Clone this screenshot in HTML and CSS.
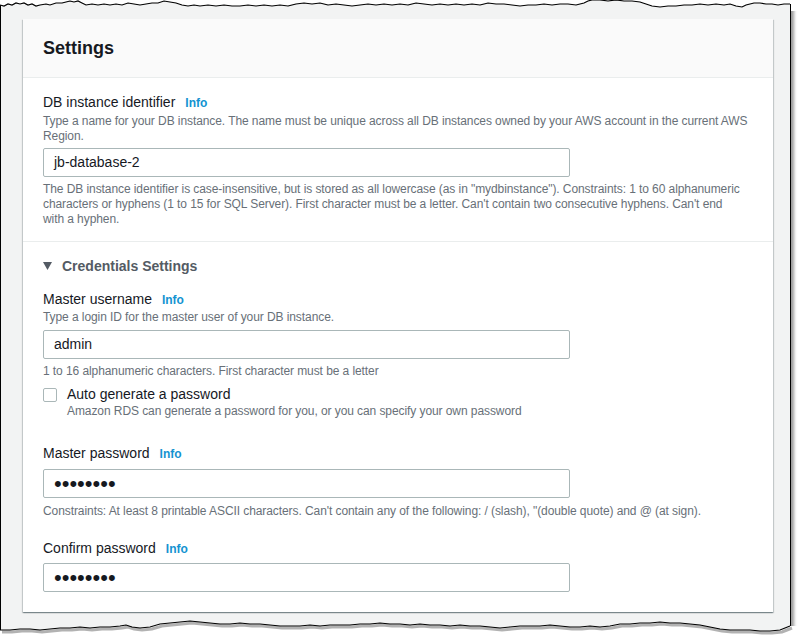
FILE: index.html
```html
<!DOCTYPE html>
<html lang="en">
<head>
    <meta charset="UTF-8">
    <meta name="viewport" content="width=device-width, initial-scale=1.0">
    <title>Settings</title>
    <link rel="stylesheet" href="styles.css">
</head>
<body>

<div class="sheet">
    <!-- torn paper edge, top -->
    <svg class="edge edge-top" width="800" height="14" viewBox="0 0 800 14">
        <polygon class="paper-cut" points="0,0 800,0 800,11 791,11 791,4 790,4 784,4 778,5 772,4 766,4 760,3 754,3 750,4 746,5 742,7 736,6 730,4 724,5 716,4 708,5 700,4 692,5 684,5 676,6 668,6 660,7 652,6 646,4 640,2 632,1 624,1 616,0 608,1 600,0 592,0 588,1 584,3 576,5 568,4 560,4 552,5 544,4 536,5 528,5 520,6 512,5 504,4 496,4 488,3 480,5 472,4 464,5 456,4 448,5 440,4 432,5 424,4 416,3 408,5 400,4 392,5 384,4 376,5 368,4 360,5 352,6 344,5 336,4 328,5 320,3 312,4 304,3 296,4 288,6 280,5 272,6 264,5 256,6 248,5 240,6 232,6 224,5 216,6 208,5 200,6 194,5 188,6 182,5 176,3 170,2 164,1 158,3 152,3 146,4 140,5 134,4 128,3 122,5 116,4 110,5 104,4 98,5 92,4 86,5 82,3 78,1 74,2 70,1 66,2 62,3 56,3 50,5 46,4 40,5 36,6 32,4 28,5 24,3 20,4 16,3 12,5 8,4 4,6 0,5"/>
        <polyline class="paper-line" points="0,5 4,6 8,4 12,5 16,3 20,4 24,3 28,5 32,4 36,6 40,5 46,4 50,5 56,3 62,3 66,2 70,1 74,2 78,1 82,3 86,5 92,4 98,5 104,4 110,5 116,4 122,5 128,3 134,4 140,5 146,4 152,3 158,3 164,1 170,2 176,3 182,5 188,6 194,5 200,6 208,5 216,6 224,5 232,6 240,6 248,5 256,6 264,5 272,6 280,5 288,6 296,4 304,3 312,4 320,3 328,5 336,4 344,5 352,6 360,5 368,4 376,5 384,4 392,5 400,4 408,5 416,3 424,4 432,5 440,4 448,5 456,4 464,5 472,4 480,5 488,3 496,4 504,4 512,5 520,6 528,5 536,5 544,4 552,5 560,4 568,4 576,5 584,3 588,1 592,0 600,0 608,1 616,0 624,1 632,1 640,2 646,4 652,6 660,7 668,6 676,6 684,5 692,5 700,4 708,5 716,4 724,5 730,4 736,6 742,7 746,5 750,4 754,3 760,3 766,4 772,4 778,5 784,4 790,4"/>
    </svg>

    <div class="card">
        <div class="card-header">
            <h2>Settings</h2>
        </div>

        <div class="section">
            <div class="field-label">DB instance identifier<a class="info">Info</a></div>
            <div class="desc desc-top">Type a name for your DB instance. The name must be unique across all DB instances owned by your AWS account in the current AWS Region.</div>
            <div class="input-box input-first">jb-database-2</div>
            <div class="desc desc-hint">The DB instance identifier is case-insensitive, but is stored as all lowercase (as in "mydbinstance"). Constraints: 1 to 60 alphanumeric characters or hyphens (1 to 15 for SQL Server). First character must be a letter. Can't contain two consecutive hyphens. Can't end with a hyphen.</div>
        </div>

        <div class="section section-last">
            <div class="expander">
                <svg class="caret" width="9" height="8" viewBox="0 0 9 8"><polygon points="0,0 9,0 4.5,8"/></svg>
                Credentials Settings
            </div>

            <div class="field-label label-user">Master username<a class="info">Info</a></div>
            <div class="desc">Type a login ID for the master user of your DB instance.</div>
            <div class="input-box">admin</div>
            <div class="desc desc-hint">1 to 16 alphanumeric characters. First character must be a letter</div>

            <div class="check-row">
                <span class="checkbox"></span>
                <div>
                    <div class="check-label">Auto generate a password</div>
                    <div class="desc">Amazon RDS can generate a password for you, or you can specify your own password</div>
                </div>
            </div>

            <div class="field-label label-pass">Master password<a class="info">Info</a></div>
            <div class="input-box password">&bull;&bull;&bull;&bull;&bull;&bull;&bull;&bull;</div>
            <div class="desc desc-hint hint-pass">Constraints: At least 8 printable ASCII characters. Can't contain any of the following: / (slash), "(double quote) and @ (at sign).</div>

            <div class="field-label label-confirm">Confirm password<a class="info">Info</a></div>
            <div class="input-box input-confirm password">&bull;&bull;&bull;&bull;&bull;&bull;&bull;&bull;</div>
        </div>
    </div>

    <!-- torn paper edge, bottom -->
    <svg class="edge edge-bottom" width="800" height="30" viewBox="0 0 800 30">
        <polygon class="paper-cut" points="0,18 10,18 20,17 30,17 40,18 50,17 60,16 70,16 80,15 90,16 100,15 110,15 120,14 126,13 132,15 140,16 150,15 160,12 170,11 180,10 190,9 200,10 210,11 220,12 230,12 240,11 250,12 260,12 270,13 280,14 290,14 300,14 310,13 320,14 330,13 340,13 350,13 360,12 370,12 380,11 390,12 400,12 410,13 420,12 430,13 440,13 450,14 460,13 470,14 480,14 490,15 500,16 510,15 520,14 530,14 540,14 550,13 560,14 570,15 580,15 590,14 600,15 610,14 620,12 630,12 640,11 650,11 660,10 670,11 680,11 690,12 700,13 710,15 720,17 730,18 740,18 750,18 760,19 770,19 780,18 785,16 790,14 800,14 800,30 0,30"/>
        <polyline class="paper-shadow" points="0,18 10,18 20,17 30,17 40,18 50,17 60,16 70,16 80,15 90,16 100,15 110,15 120,14 126,13 132,15 140,16 150,15 160,12 170,11 180,10 190,9 200,10 210,11 220,12 230,12 240,11 250,12 260,12 270,13 280,14 290,14 300,14 310,13 320,14 330,13 340,13 350,13 360,12 370,12 380,11 390,12 400,12 410,13 420,12 430,13 440,13 450,14 460,13 470,14 480,14 490,15 500,16 510,15 520,14 530,14 540,14 550,13 560,14 570,15 580,15 590,14 600,15 610,14 620,12 630,12 640,11 650,11 660,10 670,11 680,11 690,12 700,13 710,15 720,17 730,18 740,18 750,18 760,19 770,19 780,18 785,16 790,14"/>
        <polyline class="paper-line" points="0,18 10,18 20,17 30,17 40,18 50,17 60,16 70,16 80,15 90,16 100,15 110,15 120,14 126,13 132,15 140,16 150,15 160,12 170,11 180,10 190,9 200,10 210,11 220,12 230,12 240,11 250,12 260,12 270,13 280,14 290,14 300,14 310,13 320,14 330,13 340,13 350,13 360,12 370,12 380,11 390,12 400,12 410,13 420,12 430,13 440,13 450,14 460,13 470,14 480,14 490,15 500,16 510,15 520,14 530,14 540,14 550,13 560,14 570,15 580,15 590,14 600,15 610,14 620,12 630,12 640,11 650,11 660,10 670,11 680,11 690,12 700,13 710,15 720,17 730,18 740,18 750,18 760,19 770,19 780,18 785,16 790,14"/>
    </svg>
</div>

</body>
</html>
```

FILE: styles.css
```css
body {
    margin: 0;
    background-color: #ffffff;
    font-family: "Liberation Sans", Arial, sans-serif;
    color: #16191f;
}
.sheet {
    position: relative;
    width: 791px;
    height: 642px;
    box-sizing: border-box;
    padding: 19px 17px 0 22px;
    background-color: #f2f3f3;
    border-left: 1px solid #000000;
    border-right: 1px solid #000000;
    box-shadow: 3px 2px 3px rgba(0, 0, 0, 0.4);
}
.edge {
    position: absolute;
    left: -1px;
    display: block;
}
.edge-top {
    top: 0;
}
.edge-bottom {
    bottom: 0;
}
.paper-cut {
    fill: #ffffff;
}
.paper-line {
    fill: none;
    stroke: #000000;
    stroke-width: 1.2;
}
.paper-shadow {
    fill: none;
    stroke: rgba(0, 0, 0, 0.3);
    stroke-width: 3;
    transform: translate(2px, 2px);
}
.card {
    background-color: #ffffff;
    box-shadow: 0 1px 1px 0 rgba(0, 28, 36, 0.3), 1px 1px 1px 0 rgba(0, 28, 36, 0.15), -1px 1px 1px 0 rgba(0, 28, 36, 0.15);
}
.card-header {
    background-color: #fafafa;
    padding: 18px 20px;
    border-bottom: 1px solid #eaeded;
}
h2 {
    margin: 0;
    font-size: 18px;
    line-height: 22px;
    font-weight: bold;
}
.section {
    padding: 14px 20px 14px;
    border-bottom: 1px solid #eaeded;
}
.section-last {
    border-bottom: none;
    padding-bottom: 20px;
}
.field-label {
    font-size: 14px;
    line-height: 20px;
}
.info {
    margin-left: 10px;
    font-size: 12px;
    font-weight: bold;
    color: #1493d1;
}
.desc {
    font-size: 12px;
    line-height: 15px;
    letter-spacing: -0.08px;
    color: #687078;
}
.desc-top {
    margin-top: 1px;
}
.desc-hint {
    max-width: 703px;
    margin-top: 5px;
}
.hint-pass {
    margin-top: 6px;
}
.input-box {
    width: 527px;
    height: 29px;
    box-sizing: border-box;
    margin-top: 5px;
    padding: 0 10px;
    border: 1px solid #aab7b8;
    border-radius: 2px;
    background-color: #ffffff;
    font-size: 14px;
    line-height: 27px;
}
.input-first {
    margin-top: 4px;
}
.input-confirm {
    margin-top: 4px;
}
.password {
    font-size: 22px;
    color: #16191f;
}
.expander {
    display: flex;
    align-items: center;
    gap: 10px;
    font-size: 14px;
    line-height: 20px;
    font-weight: bold;
    color: #545b64;
}
.caret {
    fill: #545b64;
}
.label-user {
    margin-top: 13px;
}
.label-pass {
    margin-top: 24px;
}
.label-confirm {
    margin-top: 19px;
}
.check-row {
    display: flex;
    gap: 10px;
    margin-top: 5px;
}
.checkbox {
    flex: none;
    width: 14px;
    height: 14px;
    margin-top: 4px;
    box-sizing: border-box;
    border: 1px solid #aab7b8;
    border-radius: 2px;
    background-color: #ffffff;
}
.check-label {
    font-size: 14px;
    line-height: 20px;
}
```
